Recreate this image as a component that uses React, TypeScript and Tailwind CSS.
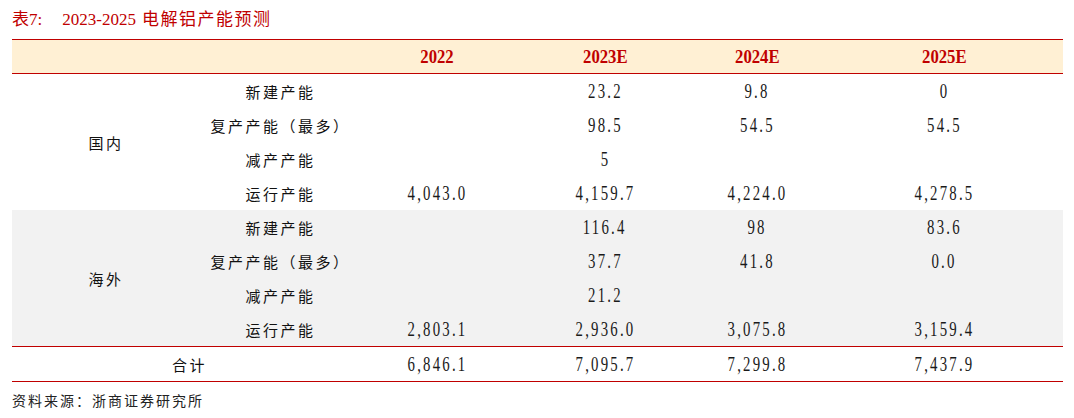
const RED = 'text-[#c00000]';

type Row = { label: string; values: string[] };

const domestic: Row[] = [
  { label: '新建产能', values: ['', '23.2', '9.8', '0'] },
  { label: '复产产能（最多）', values: ['', '98.5', '54.5', '54.5'] },
  { label: '减产产能', values: ['', '5', '', ''] },
  { label: '运行产能', values: ['4,043.0', '4,159.7', '4,224.0', '4,278.5'] },
];

const overseas: Row[] = [
  { label: '新建产能', values: ['', '116.4', '98', '83.6'] },
  { label: '复产产能（最多）', values: ['', '37.7', '41.8', '0.0'] },
  { label: '减产产能', values: ['', '21.2', '', ''] },
  { label: '运行产能', values: ['2,803.1', '2,936.0', '3,075.8', '3,159.4'] },
];

const total = ['6,846.1', '7,095.7', '7,299.8', '7,437.9'];
const years = ['2022', '2023E', '2024E', '2025E'];

const cols = 'grid grid-cols-[188px_153px_168px_168px_136px_238px]';

const Num = ({ v }: { v: string }) => (
  <span className="inline-block origin-center scale-x-[0.74] font-['Liberation_Serif',serif] text-[20px] leading-none tracking-[3px] text-[#1a1a1a]">
    {v}
  </span>
);

const Cjk = ({ children }: { children: string }) => (
  <span className="font-['Noto_Sans_CJK_SC',sans-serif] text-[15px] leading-none tracking-[2.5px] text-[#111]">
    {children}
  </span>
);

const Section = ({ name, rows, gray }: { name: string; rows: Row[]; gray?: boolean }) => (
  <div className={`${cols} ${gray ? 'bg-[#f2f2f2]' : 'bg-white'}`}>
    <div className="row-span-4 flex items-center justify-center">
      <Cjk>{name}</Cjk>
    </div>
    {rows.map((r) => (
      <div key={r.label} className="col-span-5 grid grid-cols-subgrid">
        <div className="flex h-[34px] items-center justify-center pl-[8px]">
          <Cjk>{r.label}</Cjk>
        </div>
        {r.values.map((v, i) => (
          <div key={i} className="flex h-[34px] items-center justify-center">
            {v && <Num v={v} />}
          </div>
        ))}
      </div>
    ))}
  </div>
);

export default function App() {
  return (
    <div className="h-[418px] w-[1074px] bg-white">
      <div
        className={`flex h-[39px] items-center pl-[12px] font-['Liberation_Serif','Noto_Sans_CJK_SC',serif] text-[17px] leading-none ${RED}`}
      >
        <span>表7:</span>
        <span className="ml-[20px]">2023-2025</span>
        <span className="ml-[6px] tracking-[1.5px]">电解铝产能预测</span>
      </div>

      <div className="ml-[12px] w-[1051px]">
        <div className={`${cols} h-[35px] border-y border-[#c00000] bg-[#fff0d4]`}>
          <div />
          <div />
          {years.map((y) => (
            <div key={y} className="flex items-center justify-center">
              <span
                className={`inline-block scale-x-[0.88] font-['Liberation_Serif',serif] text-[19px] font-bold leading-none ${RED}`}
              >
                {y}
              </span>
            </div>
          ))}
        </div>

        <Section name="国内" rows={domestic} />
        <Section name="海外" rows={overseas} gray />

        <div className={`${cols} h-[36px] border-y border-[#c00000]`}>
          <div className="col-span-2 flex items-center justify-center pl-[14px]">
            <Cjk>合计</Cjk>
          </div>
          {total.map((v) => (
            <div key={v} className="flex items-center justify-center">
              <Num v={v} />
            </div>
          ))}
        </div>
      </div>

      <div className="flex h-[35px] items-center pl-[12px] font-['Noto_Sans_CJK_SC',sans-serif] text-[14px] leading-none tracking-[2px] text-[#222]">
        资料来源：浙商证券研究所
      </div>
    </div>
  );
}
